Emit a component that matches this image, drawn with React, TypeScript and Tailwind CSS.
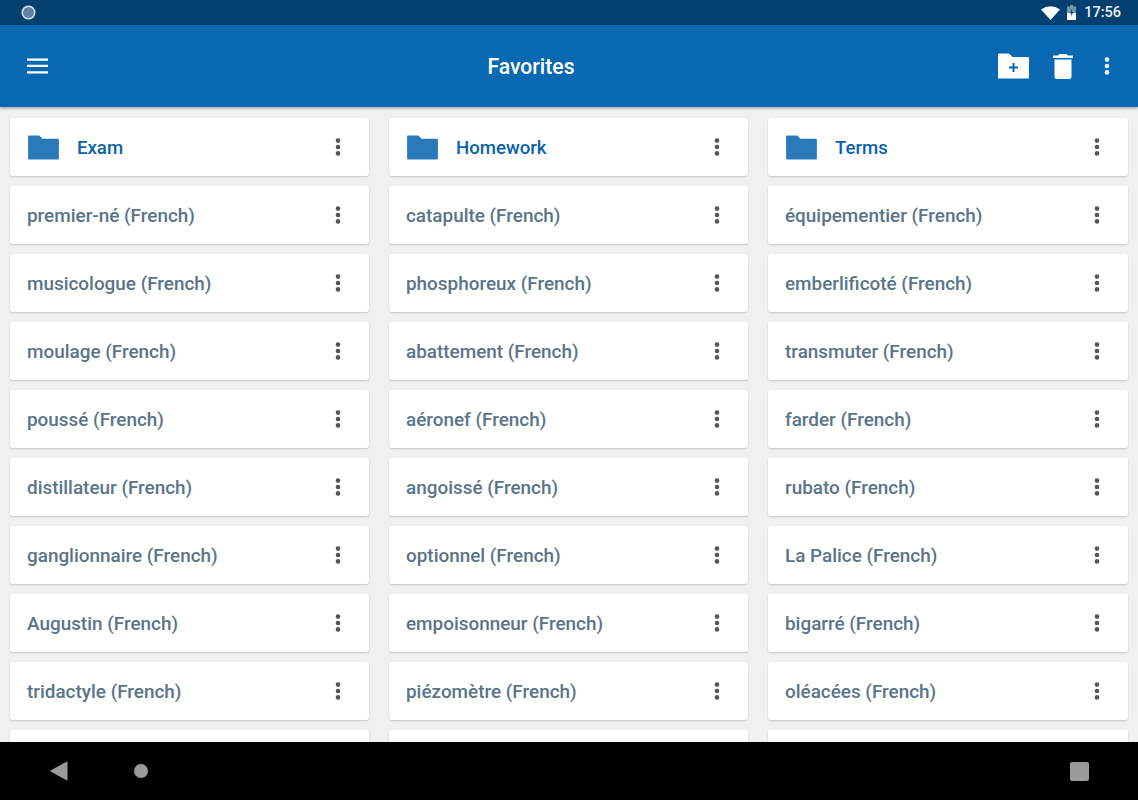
import React from 'react';

const columns = [
  {
    folder: 'Exam',
    words: ['premier-né', 'musicologue', 'moulage', 'poussé', 'distillateur', 'ganglionnaire', 'Augustin', 'tridactyle'],
  },
  {
    folder: 'Homework',
    words: ['catapulte', 'phosphoreux', 'abattement', 'aéronef', 'angoissé', 'optionnel', 'empoisonneur', 'piézomètre'],
  },
  {
    folder: 'Terms',
    words: ['équipementier', 'emberlificoté', 'transmuter', 'farder', 'rubato', 'La Palice', 'bigarré', 'oléacées'],
  },
];

const Dots = ({ color }: { color: string }) => (
  <svg width="6" height="18" viewBox="0 0 6 18" className={color} fill="currentColor">
    <circle cx="3" cy="2.600" r="2.300" />
    <circle cx="3" cy="9" r="2.300" />
    <circle cx="3" cy="15.400" r="2.300" />
  </svg>
);

const Card = ({ children }: { children?: React.ReactNode }) => (
  <div className="h-[58px] shrink-0 flex items-center justify-between pl-[17px] pr-[28px] bg-white rounded-[3px] shadow-[0_1px_2px_rgba(0,0,0,0.18)]">
    {children}
  </div>
);

const FolderCard = ({ name }: { name: string }) => (
  <Card>
    <div className="flex items-center gap-[18px] pl-[1px]">
      <svg width="31" height="25" viewBox="0 0 32 26" className="text-[#2a7aba]" fill="currentColor">
        <path d="M0 1.500Q0 .5 1 .5H11.500L15 4H31Q32 4 32 5V25Q32 25.500 31 25.500H1Q0 25.500 0 25Z" />
      </svg>
      <span className="pt-[1px] text-[18.600px] leading-6 font-medium text-[#0a63a8]">{name}</span>
    </div>
    <Dots color="text-[#555555]" />
  </Card>
);

export default function App() {
  return (
    <div className="h-[800px] flex flex-col bg-[#f0f0f0] overflow-hidden font-['Roboto',sans-serif]">
      <div className="h-[25px] shrink-0 flex items-center justify-between pl-[21px] pr-[17px] bg-[#04406f]">
        <svg width="15" height="15" viewBox="0 0 15 15">
          <circle cx="7.500" cy="7.500" r="7" fill="#dfe6ec" />
          <circle cx="7.500" cy="7.500" r="5.500" fill="#5f83a6" />
        </svg>
        <div className="flex items-center">
          <svg width="19" height="14" viewBox="0 0 19 14" fill="white">
            <path d="M0 3.500Q9.500 -3 19 3.500L9.500 14Z" />
          </svg>
          <svg width="9" height="15" viewBox="0 0 9 15" className="ml-[7px]">
            <path d="M3 0H6V1.500H9V15H0V1.500H3Z" fill="white" fillOpacity="0.45" />
            <path d="M0 8H9V15H0Z" fill="white" />
            <path d="M5.500 3L2.800 8.500H4.500L3.500 12L6.500 7H4.800Z" fill="#04406f" />
          </svg>
          <span className="ml-[8px] text-[14.500px] leading-5 font-medium text-[#eef3f7]">17:56</span>
        </div>
      </div>

      <header className="relative z-10 h-[82px] shrink-0 flex items-center justify-between pl-[27px] pr-[28px] bg-[#0868b1] shadow-[0_1px_3px_rgba(0,0,0,0.4)]">
        <div className="w-[125px] flex items-center">
          <svg width="21" height="16" viewBox="0 0 21 16" fill="white">
            <path d="M0 0.500H21V2.700H0ZM0 6.800H21V9H0ZM0 13.200H21V15.400H0Z" />
          </svg>
        </div>
        <h1 className="pt-[2px] text-[21.200px] leading-7 font-medium text-white">Favorites</h1>
        <div className="w-[200px] flex items-center justify-end">
          <svg width="31" height="26" viewBox="0 0 31 26" fill="white">
            <path fillRule="evenodd" d="M0 1.500Q0 .5 1 .5H11L14.500 4H30Q31 4 31 5V25Q31 25.500 30 25.500H1Q0 25.500 0 25ZM14.500 10V13.500H11V15.500H14.500V19H16.500V15.500H20V13.500H16.500V10Z" />
          </svg>
          <svg width="20" height="25" viewBox="0 0 20 25" fill="white" className="ml-[24px]">
            <path d="M6.500 0H13.500L15 1.500H20V4H0V1.500H5ZM1.500 5.500H18.500V22.500Q18.500 25 16 25H4Q1.500 25 1.500 22.500Z" />
          </svg>
          <div className="ml-[31px]">
            <Dots color="text-[#f2f7fb]" />
          </div>
        </div>
      </header>

      <main className="flex-1 min-h-0 overflow-hidden grid grid-cols-[359px_359px_360px] gap-x-5 px-[10px] pt-[11px]">
        {columns.map((col) => (
          <div key={col.folder} className="flex flex-col gap-[10px]">
            <FolderCard name={col.folder} />
            {col.words.map((w) => (
              <Card key={w}>
                <span className="pt-[1px] text-[18.900px] leading-6 font-medium text-[#5a7489]">{w} (French)</span>
                <Dots color="text-[#555555]" />
              </Card>
            ))}
            <Card />
          </div>
        ))}
      </main>

      <nav className="h-[58px] shrink-0 flex items-center justify-between pl-[50px] pr-[49px] bg-black">
        <div className="flex items-center gap-[66px]">
          <svg width="18" height="20" viewBox="0 0 18 20" fill="#9a9a9a">
            <path d="M17 0.500Q17.500 0.500 17.500 1.500V18.500Q17.500 19.500 17 19.500L0.500 10.500Q0 10 0.500 9.500Z" />
          </svg>
          <svg width="14" height="14" viewBox="0 0 14 14" fill="#9a9a9a">
            <circle cx="7" cy="7" r="7" />
          </svg>
        </div>
        <div className="w-[19px] h-[19px] rounded-[2px] bg-[#9a9a9a]" />
      </nav>
    </div>
  );
}
